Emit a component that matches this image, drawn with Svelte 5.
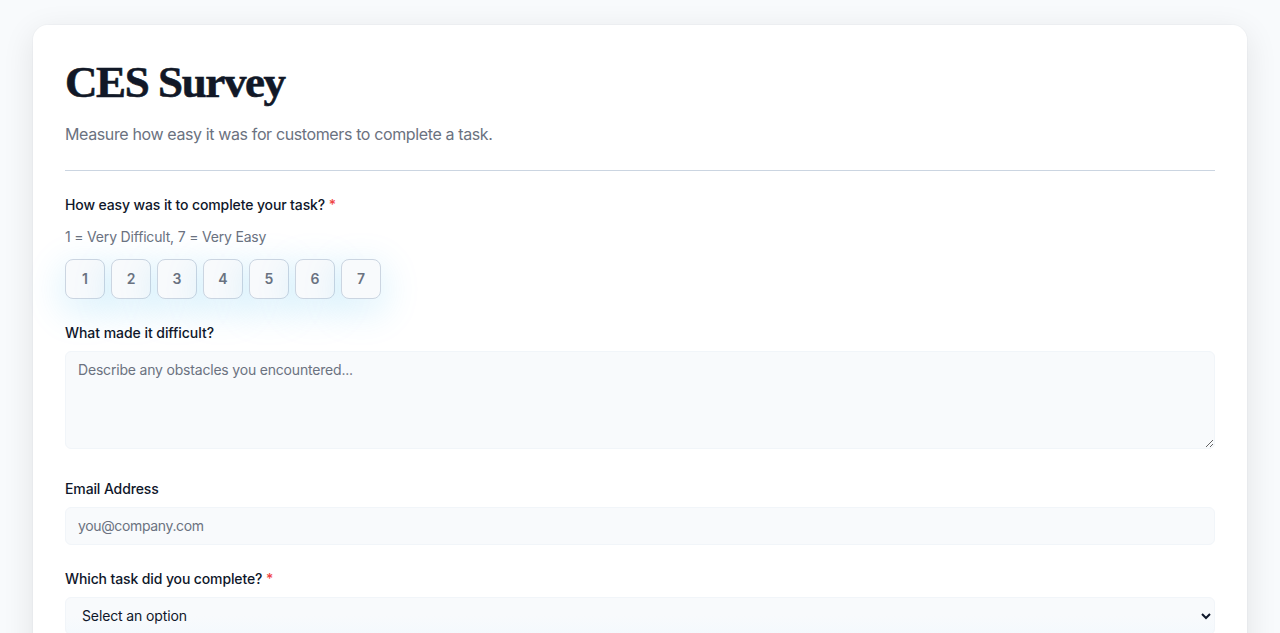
<script lang="ts">
	const scores = [1, 2, 3, 4, 5, 6, 7];
	const tasks = ["Account setup", "Making a purchase", "Contacting support", "Other"];

	let score = $state(0);
	let obstacles = $state("");
	let email = $state("");
	let task = $state("");
</script>

<div class="page">
	<form class="card">
		<header>
			<h1>CES Survey</h1>
			<p>Measure how easy it was for customers to complete a task.</p>
		</header>

		<div class="field rating">
			<span class="label">How easy was it to complete your task? <span class="required">*</span></span>
			<p class="hint">1 = Very Difficult, 7 = Very Easy</p>
			<div class="scores">
				{#each scores as n}
					<button type="button" class:selected={score === n} onclick={() => (score = n)}>{n}</button>
				{/each}
			</div>
		</div>

		<div class="field">
			<label class="label difficult" for="obstacles">What made it difficult?</label>
			<textarea id="obstacles" placeholder="Describe any obstacles you encountered..." bind:value={obstacles}></textarea>
		</div>

		<div class="field">
			<label class="label" for="email">Email Address</label>
			<input id="email" type="email" placeholder="you@company.com" bind:value={email} />
		</div>

		<div class="field">
			<label class="label" for="task">Which task did you complete? <span class="required">*</span></label>
			<select id="task" bind:value={task}>
				<option value="">Select an option</option>
				{#each tasks as t}
					<option value={t}>{t}</option>
				{/each}
			</select>
		</div>
	</form>
</div>

<style>
	:global(body) {
		overflow: hidden;
	}

	.page {
		box-sizing: border-box;
		height: 100vh;
		overflow: hidden;
		padding: 24px 32px;
		background: #f8fafc;
		color: #0f172a;
		font-family: Inter, sans-serif;
	}

	.card {
		box-sizing: border-box;
		min-height: 720px;
		padding: 32px;
		background: white;
		border: 1px solid rgba(15, 23, 42, 0.02);
		border-radius: 16px;
		background-clip: padding-box;
		box-shadow: 0 8px 32px rgba(0, 0, 0, 0.09);
	}

	header {
		padding-bottom: 24px;
		margin-bottom: 24px;
		border-bottom: 1px solid #cbd5e1;
	}

	h1 {
		margin: 0 0 15px;
		color: #111827;
		font: bold 45px/50px "Liberation Serif", serif;
		letter-spacing: -1.42px;
		-webkit-text-stroke: 0.6px #111827;
	}

	header p {
		margin: 0;
		color: #6b7280;
		font-size: 16px;
		line-height: 24px;
		letter-spacing: -0.375px;
	}

	.field {
		display: flex;
		flex-direction: column;
		margin-bottom: 24px;
	}

	.label {
		margin-bottom: 8px;
		font-size: 14px;
		font-weight: 500;
		line-height: 20px;
		letter-spacing: -0.12px;
	}

	.label.difficult {
		letter-spacing: -0.05px;
	}

	.required {
		color: #ef4444;
	}

	.hint {
		margin: 4px 0 12px;
		color: #6b7280;
		font-size: 14px;
		line-height: 20px;
		letter-spacing: -0.185px;
	}

	.scores {
		display: flex;
		gap: 6px;
	}

	button {
		width: 40px;
		height: 40px;
		padding: 0;
		background: #f8fafc;
		border: 1px solid #cbd5e1;
		border-radius: 8px;
		color: #6b7280;
		font: 600 14px/20px Inter, sans-serif;
		box-shadow: 0 10px 40px rgba(14, 165, 233, 0.2);
	}

	button.selected {
		background: #0ea5e9;
		color: white;
	}

	textarea,
	input,
	select {
		box-sizing: border-box;
		width: 100%;
		height: 38px;
		padding: 8px 12px;
		background: #f8fafc;
		border: 1px solid #f1f5f9;
		border-radius: 6px;
		color: #0f172a;
		font: 400 14px/20px Inter, sans-serif;
		letter-spacing: -0.12px;
	}

	textarea {
		height: 98px;
		margin-bottom: 6px;
		resize: vertical;
		letter-spacing: -0.19px;
	}

	input {
		padding: 7px 12px 9px;
		letter-spacing: -0.36px;
	}

	select {
		padding: 7px 12px 9px;
		background: linear-gradient(#f8fafc 50%, #f4f9fd);
	}

	textarea::placeholder,
	input::placeholder {
		color: #6b7280;
	}
</style>
